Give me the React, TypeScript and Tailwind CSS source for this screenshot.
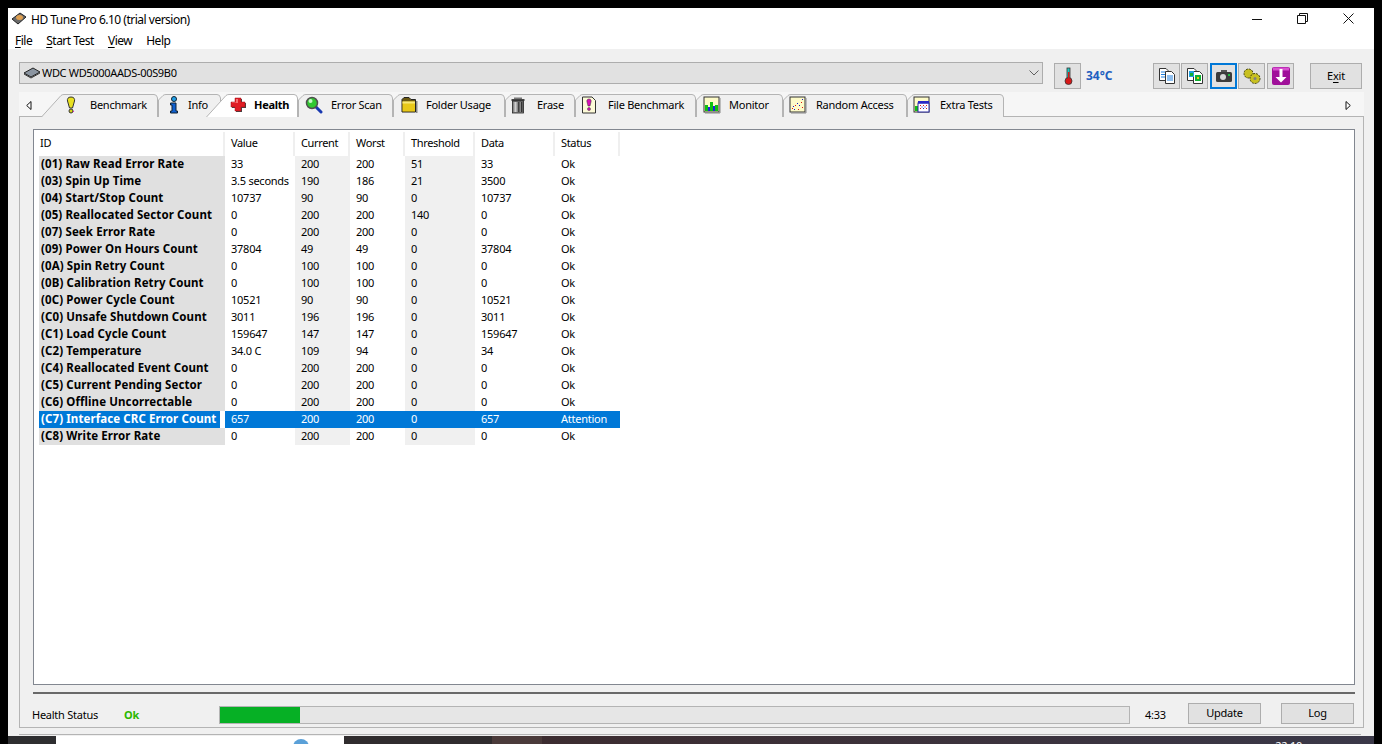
import type { ReactNode } from "react";

const rows = [
  ["(01) Raw Read Error Rate", "33", "200", "200", "51", "33", "Ok"],
  ["(03) Spin Up Time", "3.5 seconds", "190", "186", "21", "3500", "Ok"],
  ["(04) Start/Stop Count", "10737", "90", "90", "0", "10737", "Ok"],
  ["(05) Reallocated Sector Count", "0", "200", "200", "140", "0", "Ok"],
  ["(07) Seek Error Rate", "0", "200", "200", "0", "0", "Ok"],
  ["(09) Power On Hours Count", "37804", "49", "49", "0", "37804", "Ok"],
  ["(0A) Spin Retry Count", "0", "100", "100", "0", "0", "Ok"],
  ["(0B) Calibration Retry Count", "0", "100", "100", "0", "0", "Ok"],
  ["(0C) Power Cycle Count", "10521", "90", "90", "0", "10521", "Ok"],
  ["(C0) Unsafe Shutdown Count", "3011", "196", "196", "0", "3011", "Ok"],
  ["(C1) Load Cycle Count", "159647", "147", "147", "0", "159647", "Ok"],
  ["(C2) Temperature", "34.0 C", "109", "94", "0", "34", "Ok"],
  ["(C4) Reallocated Event Count", "0", "200", "200", "0", "0", "Ok"],
  ["(C5) Current Pending Sector", "0", "200", "200", "0", "0", "Ok"],
  ["(C6) Offline Uncorrectable", "0", "200", "200", "0", "0", "Ok"],
  ["(C7) Interface CRC Error Count", "657", "200", "200", "0", "657", "Attention"],
  ["(C8) Write Error Rate", "0", "200", "200", "0", "0", "Ok"],
];

const columns = ["ID", "Value", "Current", "Worst", "Threshold", "Data", "Status"];
const gridCols = "grid grid-cols-[186px_70px_55px_55px_70px_80px_65px]";

function Icon({ children }: { children: ReactNode }) {
  return (
    <svg width="18" height="18" viewBox="0 0 18 18" className="shrink-0">
      {children}
    </svg>
  );
}

const BulbIcon = () => (
  <Icon>
    <path d="M9 1C6 1 5 3 5.500 5L7.500 12H10.500L12.500 5C13 3 12 1 9 1Z" fill="#e8e020" stroke="#333" />
    <circle cx="9" cy="15" r="2" fill="#d8d018" stroke="#333" />
    <rect x="11" y="15" width="1" height="1" fill="#e020c0" />
  </Icon>
);
const InfoIcon = () => (
  <Icon>
    <circle cx="9" cy="3" r="2.500" fill="#20a0e8" stroke="#123" />
    <path d="M5.500 7H11V15H12.500V17H5.500V15H7V9H5.500Z" fill="#1060d0" stroke="#123" />
  </Icon>
);
const CrossIcon = () => (
  <Icon>
    <path d="M7 3H13V7H17V12H13V16H7V12H3V7H7Z" fill="#444" />
    <path d="M6 2H12V6H16V11H12V15H6V11H2V6H6Z" fill="#e01c24" stroke="#a01018" strokeWidth="0.500" />
    <path d="M7 3H9V7H3V6.500H7Z" fill="#f87070" />
  </Icon>
);
const ScanIcon = () => (
  <Icon>
    <path d="M10.500 10.500L16 16" stroke="#1838b0" strokeWidth="3" strokeLinecap="round" />
    <circle cx="7" cy="7" r="5.500" fill="#30c830" stroke="#505050" strokeWidth="1.500" />
    <circle cx="5.500" cy="5" r="2" fill="#c8f8c8" />
  </Icon>
);
const FolderIcon = () => (
  <Icon>
    <path d="M2 3.500L4 1.500H9L11 3.500H15.500V16H2Z" fill="#6a5810" stroke="#222" />
    <rect x="2.500" y="5.500" width="12.500" height="10" fill="#e8c818" />
    <rect x="2.500" y="5.500" width="12.500" height="2" fill="#f8e878" />
    <rect x="16" y="5" width="1.500" height="12" fill="#888" />
  </Icon>
);
const TrashIcon = () => (
  <Icon>
    <path d="M1.500 3H14.500V5H1.500Z" fill="#444" />
    <path d="M4 1.500H12V3H4Z" fill="#777" />
    <rect x="2.500" y="5" width="11" height="12" fill="#8a8a8a" stroke="#222" strokeWidth="0.800" />
    <rect x="4.500" y="6" width="2" height="10" fill="#d0d0d0" />
    <rect x="8" y="6" width="1.500" height="10" fill="#404040" />
    <rect x="11" y="6" width="1.500" height="10" fill="#333" />
  </Icon>
);
const PageBulbIcon = () => (
  <Icon>
    <path d="M2.500 1H12L15.500 4.500V17H2.500Z" fill="#fdfbd8" stroke="#333" />
    <path d="M9 3C7 3 6.500 4.500 7 6L8 10H10L11 6C11.500 4.500 11 3 9 3Z" fill="#d810b8" stroke="#333" strokeWidth="0.500" />
    <circle cx="9" cy="13" r="1.500" fill="#d810b8" stroke="#333" strokeWidth="0.500" />
  </Icon>
);
const MonitorIcon = () => (
  <Icon>
    <rect x="1" y="1" width="15" height="15" fill="#fdfbc8" stroke="#333" />
    <rect x="2" y="9" width="3" height="6" fill="#10c010" />
    <rect x="5" y="11" width="2" height="4" fill="#2020e0" />
    <rect x="7" y="6" width="3" height="9" fill="#10c010" />
    <rect x="10" y="10" width="2" height="5" fill="#2020e0" />
    <rect x="12" y="9" width="3" height="6" fill="#10c010" />
    <rect x="16.500" y="2" width="1" height="15" fill="#888" />
    <rect x="2" y="16.500" width="15" height="1" fill="#888" />
  </Icon>
);
const RandomIcon = () => (
  <Icon>
    <rect x="1" y="1" width="15" height="15" fill="#fdfbc8" stroke="#333" />
    <g fill="#e01010">
      <rect x="3" y="12" width="1" height="1" />
      <rect x="6" y="9" width="1" height="1" />
      <rect x="9" y="13" width="1" height="1" />
      <rect x="12" y="6" width="1" height="1" />
      <rect x="13" y="11" width="1" height="1" />
    </g>
    <g fill="#1818c8">
      <rect x="4" y="10" width="1" height="1" />
      <rect x="8" y="7" width="1" height="1" />
      <rect x="10" y="9" width="1" height="1" />
      <rect x="13" y="3" width="1" height="1" />
      <rect x="5" y="13" width="1" height="1" />
    </g>
    <rect x="16.500" y="2" width="1" height="15" fill="#888" />
    <rect x="2" y="16.500" width="15" height="1" fill="#888" />
  </Icon>
);
const ExtraIcon = () => (
  <Icon>
    <rect x="1" y="1" width="15" height="15" fill="#fdfbc8" stroke="#333" />
    <rect x="2" y="10" width="3" height="5" fill="#10c010" />
    <rect x="5" y="7" width="11" height="9" fill="#fff" stroke="#2828a0" />
    <rect x="5" y="5" width="11" height="2.500" fill="#2828c8" />
    <g fill="#d82020">
      <rect x="7" y="9" width="1" height="1" />
      <rect x="10" y="9" width="1" height="1" />
      <rect x="13" y="9" width="1" height="1" />
      <rect x="7" y="12" width="1" height="1" />
      <rect x="13" y="12" width="1" height="1" />
    </g>
    <g fill="#2828c8">
      <rect x="10" y="12" width="1" height="1" />
      <rect x="8.500" y="10.500" width="1" height="1" />
      <rect x="11.500" y="10.500" width="1" height="1" />
    </g>
  </Icon>
);

const tabs = [
  { label: "Benchmark", w: 117, long: true, cls: "w-[117px] pl-[21px]", gap: "ml-[10px]", icon: <BulbIcon /> },
  { label: "Info", w: 63, cls: "w-[63px] pl-[7px]", gap: "ml-[5px]", icon: <InfoIcon /> },
  { label: "Health", w: 92, long: true, active: true, cls: "w-[92px] pl-[23px] -ml-[15px]", gap: "ml-[7px]", icon: <CrossIcon /> },
  { label: "Error Scan", w: 95, cls: "w-[95px] pl-[7px]", gap: "ml-[8px]", icon: <ScanIcon /> },
  { label: "Folder Usage", w: 112, cls: "w-[112px] pl-[7px]", gap: "ml-[8px]", icon: <FolderIcon /> },
  { label: "Erase", w: 70, cls: "w-[70px] pl-[5px]", gap: "ml-[9px]", icon: <TrashIcon /> },
  { label: "File Benchmark", w: 121, cls: "w-[121px] pl-[5px]", gap: "ml-[10px]", icon: <PageBulbIcon /> },
  { label: "Monitor", w: 87, cls: "w-[87px] pl-[7px]", gap: "ml-[8px]", icon: <MonitorIcon /> },
  { label: "Random Access", w: 124, cls: "w-[124px] pl-[6px]", gap: "ml-[9px]", icon: <RandomIcon /> },
  { label: "Extra Tests", w: 97, cls: "w-[97px] pl-[6px]", gap: "ml-[9px]", icon: <ExtraIcon /> },
];

function TabShape({ w, long, active }: { w: number; long?: boolean; active?: boolean }) {
  // Benchmark and Health have the long slant, the rest only a chamfered corner
  const left = long ? "M0.500 23 L20 1.500 Q21 0.500 23 0.500" : "M0.500 23 V6 L5 1.500 Q6 0.500 8 0.500";
  const d = `${left} H${w - 4} Q${w - 1} 0.500 ${w - 0.5} 4 V23`;
  return (
    <svg width={w} height={23} className="absolute left-0 top-0">
      <path d={d} fill={active ? "#ffffff" : "#f0f0f0"} stroke="#b4b4b4" />
    </svg>
  );
}

function TabItem({ tab }: { tab: (typeof tabs)[number] }) {
  return (
    <div className={`relative flex h-[22px] items-center ${tab.cls} ${tab.active ? "z-10 font-bold" : ""}`}>
      <TabShape w={tab.w} long={tab.long} active={tab.active} />
      <span className="relative">{tab.icon}</span>
      <span className={`relative ${tab.gap}`}>{tab.label}</span>
    </div>
  );
}

function ToolButton({ children, active }: { children: ReactNode; active?: boolean }) {
  return (
    <button
      className={`flex h-[26px] w-[27px] items-center justify-center bg-[#e1e1e1] ${
        active ? "border-2 border-[#0078d7]" : "border border-[#adadad]"
      }`}
    >
      {children}
    </button>
  );
}

function Underlined({ first, rest }: { first: string; rest: string }) {
  return (
    <span>
      <span className="underline underline-offset-2">{first}</span>
      {rest}
    </span>
  );
}

export default function App() {
  return (
    <div className="flex h-[744px] w-[1382px] flex-col overflow-hidden bg-black px-2 pt-2 text-[11px] tracking-[-0.25px] text-black [font-family:'Noto_Sans',sans-serif]">
      <div className="flex min-h-0 flex-1 flex-col bg-[#f0f0f0]">
        {/* title bar */}
        <div className="flex h-5 items-center bg-white text-xs tracking-[-0.5px]">
          <svg width="16" height="14" viewBox="0 0 16 14" className="ml-[3px] mr-[4px] mt-[2px]">
            <path d="M1 7L9 1L15 5L7 12Z" fill="#6a6a6a" stroke="#222" />
            <ellipse cx="8.500" cy="5.500" rx="3.500" ry="2.500" fill="#e0a050" />
          </svg>
          <span className="pt-[3px]">HD Tune Pro 6.10 (trial version)</span>
          <div className="ml-auto flex items-center">
            <svg width="10" height="10" viewBox="0 0 10 10" className="mr-[35px]">
              <path d="M0 6.500H10" stroke="#111" />
            </svg>
            <svg width="11" height="11" viewBox="0 0 11 11" className="mr-[35px]">
              <path d="M2.500 2.500V0.500H10.500V8.500H8.500M0.500 2.500H8.500V10.500H0.500Z" fill="none" stroke="#111" />
            </svg>
            <svg width="11" height="11" viewBox="0 0 11 11" className="mr-[20px]">
              <path d="M0.500 0.500L10.500 10.500M10.500 0.500L0.500 10.500" stroke="#111" />
            </svg>
          </div>
        </div>
        {/* menu */}
        <div className="flex h-[21px] items-center gap-[14px] bg-white pl-[7px] pt-[5px] text-xs tracking-[-0.5px]">
          <Underlined first="F" rest="ile" />
          <Underlined first="S" rest="tart Test" />
          <Underlined first="V" rest="iew" />
          <span>Help</span>
        </div>

        <div className="flex flex-1 flex-col pl-[11px] pr-[10px] pt-[13px]">
          {/* drive selector and tools */}
          <div className="flex h-[27px]">
            <div className="flex h-[22px] w-[1024px] items-center border border-[#adadad] bg-[#e1e1e1] pl-[3px]">
              <svg width="18" height="12" viewBox="0 0 18 12">
                <path d="M1 6L10 1L17 5L8 10Z" fill="#8a94a0" stroke="#222" />
                <path d="M1 7L8 11L17 6" fill="none" stroke="#333" />
              </svg>
              <span className="ml-[1px] pt-px tracking-[-0.33px]">WDC WD5000AADS-00S9B0</span>
              <svg width="10" height="6" viewBox="0 0 10 6" className="ml-auto mr-[3px]">
                <path d="M0.500 0.500L5 5L9.500 0.500" fill="none" stroke="#606060" />
              </svg>
            </div>
            <div className="ml-[11px] mt-px">
              <ToolButton>
                <svg width="12" height="20" viewBox="0 0 12 20">
                  <rect x="5" y="2" width="3" height="13" fill="#20c8c0" stroke="#333" strokeWidth="0.800" />
                  <circle cx="6.500" cy="15" r="3.500" fill="#d81818" stroke="#333" strokeWidth="0.800" />
                  <rect x="6" y="6" width="1.500" height="9" fill="#d81818" />
                </svg>
              </ToolButton>
            </div>
            <span className="ml-[5px] mt-[6px] w-[28px] text-[12px] font-bold leading-4 tracking-normal text-[#1f5fc0]">34°C</span>
            <div className="ml-[39px] mt-px flex gap-[1px]">
              <ToolButton>
                <svg width="18" height="18" viewBox="0 0 18 18">
                  <path d="M1.500 1.500H8L10 3.500V13.500H1.500Z" fill="#fff" stroke="#333" />
                  <path d="M7.500 4.500H13.500L16.500 7.500V16.500H7.500Z" fill="#fff" stroke="#333" />
                  <path d="M3 5H7M3 7.500H7M3 10H7M9 9H15M9 11H15M9 13H15" stroke="#2080e0" />
                </svg>
              </ToolButton>
              <ToolButton>
                <svg width="18" height="18" viewBox="0 0 18 18">
                  <path d="M1.500 1.500H8L10 3.500V13.500H1.500Z" fill="#fff" stroke="#333" />
                  <path d="M7.500 4.500H13.500L16.500 7.500V16.500H7.500Z" fill="#fff" stroke="#333" />
                  <rect x="3" y="4" width="5" height="6" fill="#20a0e0" />
                  <rect x="4" y="6" width="3" height="3" fill="#10b030" />
                  <rect x="9" y="8" width="6" height="6" fill="#10b030" />
                  <rect x="11" y="10" width="2" height="2" fill="#e8c818" />
                </svg>
              </ToolButton>
              <div className="ml-px">
                <ToolButton active>
                  <svg width="18" height="14" viewBox="0 0 18 14">
                    <path d="M6 1H12V3H6Z" fill="#555" />
                    <rect x="1" y="3" width="16" height="10" rx="1.500" fill="#3c3c3c" />
                    <circle cx="8" cy="8" r="3" fill="#d8d8d8" />
                    <rect x="13" y="5" width="2" height="2" fill="#20c040" />
                  </svg>
                </ToolButton>
              </div>
              <ToolButton>
                <svg width="20" height="18" viewBox="0 0 20 18">
                  <circle cx="6.500" cy="6.500" r="4.500" fill="#c8c020" stroke="#404010" strokeDasharray="2 1" />
                  <circle cx="13" cy="11.500" r="5" fill="#c8c020" stroke="#404010" strokeDasharray="2 1" />
                  <circle cx="13" cy="11.500" r="1.500" fill="#808080" />
                </svg>
              </ToolButton>
              <div className="ml-px">
                <ToolButton>
                  <svg width="20" height="20" viewBox="0 0 20 20">
                    <rect x="1" y="1" width="18" height="18" rx="2" fill="#a0109a" />
                    <rect x="2" y="1.500" width="16" height="3" fill="#d850d0" />
                    <path d="M8.500 3H11.500V11H15.500L10 16.500L4.500 11H8.500Z" fill="#fff" />
                  </svg>
                </ToolButton>
              </div>
            </div>
            <button className="ml-[16px] mt-px h-[26px] w-[52px] border border-[#adadad] bg-[#e1e1e1]">
              E<span className="underline underline-offset-2">x</span>it
            </button>
          </div>

          {/* tabs */}
          <div className="mt-[3px] flex h-6 bg-[#f6f6f6] pt-[2px]">
            <div className="flex h-[22px] w-[22px] items-center pl-[7px]">
              <svg width="6" height="9" viewBox="0 0 6 9">
                <path d="M5 0.500V8.500L0.700 4.500Z" fill="#fff" stroke="#111" />
              </svg>
            </div>
            {tabs.map((tab) => (
              <TabItem key={tab.label} tab={tab} />
            ))}
            <div className="ml-auto flex h-[22px] items-center pr-[13px]">
              <svg width="6" height="9" viewBox="0 0 6 9">
                <path d="M1 0.500V8.500L5.300 4.500Z" fill="#fff" stroke="#111" />
              </svg>
            </div>
          </div>

          {/* health panel */}
          <div className="flex h-[612px] flex-col border border-[#b4b4b4] pl-[13px] pr-2 pt-3">
            <div className="h-[556px] border border-[#828790] bg-white pl-[5px] pt-[2px]">
              <div className={`${gridCols} h-6 tracking-[-0.35px]`}>
                {columns.map((col, i) => (
                  <div
                    key={col}
                    className={`flex items-center border-r-2 border-[#efefef] pb-[2px] ${i === 0 ? "pl-[1px]" : "pl-[6px]"}`}
                  >
                    {col}
                  </div>
                ))}
              </div>
              {rows.map((row) => {
                const selected = row[0].startsWith("(C7)");
                return (
                  <div key={row[0]} className={`${gridCols} h-[17px] leading-[15px]`}>
                    <div className={selected ? "bg-white" : "bg-[#e0e0e0]"}>
                      <div
                        className={`h-[17px] whitespace-nowrap pl-[2px] text-[11.5px] font-bold tracking-[0.1px] ${
                          selected ? "w-[181px] bg-[#0078d7] text-white" : ""
                        }`}
                      >
                        {row[0]}
                      </div>
                    </div>
                    {row.slice(1).map((cell, i) => (
                      <div
                        key={i}
                        className={`whitespace-nowrap pl-[6px] ${
                          selected
                            ? "bg-[#0078d7] text-white"
                            : i === 1 || i === 3
                              ? "bg-[#f0f0f0]"
                              : ""
                        }`}
                      >
                        {cell}
                      </div>
                    ))}
                  </div>
                );
              })}
            </div>

            <div className="mt-[7px] h-[2px] bg-[#696969]" />

            {/* status row */}
            <div className="mt-[9px] flex h-[21px] items-center -ml-px">
              <span className="w-[92px] pt-[3px]">Health Status</span>
              <span className="w-[95px] pt-[3px] font-bold text-[#2cb800]">Ok</span>
              <div className="mt-[3px] h-[18px] w-[911px] border border-[#b4b4b4] bg-[#e6e6e6]">
                <div className="h-full w-[80px] bg-[#06b025]" />
              </div>
              <span className="ml-[15px] w-[43px] pt-[3px]">4:33</span>
              <button className="h-[21px] w-[73px] border border-[#adadad] bg-[#e1e1e1]">Update</button>
              <button className="ml-[20px] h-[21px] w-[73px] border border-[#adadad] bg-[#e1e1e1]">Log</button>
            </div>
          </div>

          <div className="mt-[6px] h-px w-[1342px] bg-[#b4b4b4]" />
        </div>

        {/* taskbar, cut off by the bottom of the screenshot */}
        <div className="mt-px flex h-2 shrink-0 overflow-hidden bg-[#34303a]">
          <div className="w-12 bg-[#2e2e30]" />
          <div className="w-[288px] bg-white pl-[237px]">
            <div className="mt-[3px] h-4 w-4 rounded-full bg-[#5aa0d8]" />
          </div>
          <div className="w-[148px] bg-[#302c2e]" />
          <div className="w-[50px] bg-[#4a3a3a]" />
          <div className="flex flex-1 justify-end bg-gradient-to-r from-[#3c2c30] to-[#3a3848] pr-[72px]">
            <span className="mt-[2px] text-[11px] leading-4 text-white">22:10</span>
          </div>
        </div>
      </div>
    </div>
  );
}
